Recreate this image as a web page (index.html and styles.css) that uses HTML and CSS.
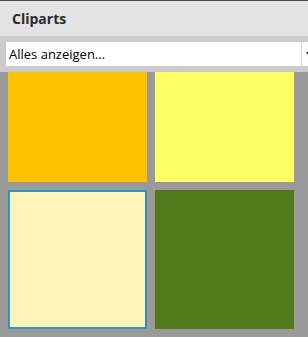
FILE: index.html
```html
<!DOCTYPE html>
<html lang="de">
<head>
    <meta charset="UTF-8">
    <title>Cliparts</title>
    <link rel="stylesheet" href="styles.css">
</head>
<body>

<div class="panel">
    <div class="panel-header">Cliparts</div>

    <div class="toolbar">
        <div class="dropdown">
            <span class="dropdown-text">Alles anzeigen...</span>
            <span class="dropdown-arrow"></span>
        </div>
    </div>

    <div class="clips">
        <div class="clip-grid">
            <div class="clip" style="background:#ffc200"></div>
            <div class="clip" style="background:#ffff66"></div>
            <div class="clip selected" style="background:#fff5b8"></div>
            <div class="clip" style="background:#507a1b"></div>
        </div>
    </div>
</div>

</body>
</html>
```

FILE: styles.css
```css
html, body { margin: 0; padding: 0; overflow: hidden; }
body { font-family: "Open Sans", "Noto Sans", sans-serif; background: #9a9a9a; }
.panel { width: 308px; height: 337px; display: flex; flex-direction: column; }
.panel-header { height: 36px; border-top: 1px solid #4a4a4a; background: #e3e3e3; font-size: 14px; font-weight: bold; color: #2b2b2b; padding-left: 12px; line-height: 36px; box-sizing: border-box; }
.toolbar { height: 36px; background: #cccccc; padding: 6px 0 6px 6px; box-sizing: border-box; overflow: hidden; }
.dropdown { width: 312px; height: 24px; background: #fff; display: flex; align-items: center; }
.dropdown-text { flex: 1; font-size: 13px; color: #000; padding-left: 3px; }
.dropdown-arrow { width: 16px; height: 24px; border-left: 1px solid #dcdcdc; position: relative; }
.dropdown-arrow::after { content: ""; position: absolute; left: 4px; top: 10px; border-left: 3px solid transparent; border-right: 3px solid transparent; border-top: 4px solid #000; }
.clips { flex: 1; overflow: hidden; }
.clip-grid { display: grid; grid-template-columns: 139px 139px; gap: 8px; padding-left: 8px; margin-top: -29px; }
.clip { height: 139px; box-sizing: border-box; }
.clip.selected { border: 2px solid #2a92c6; }
```
